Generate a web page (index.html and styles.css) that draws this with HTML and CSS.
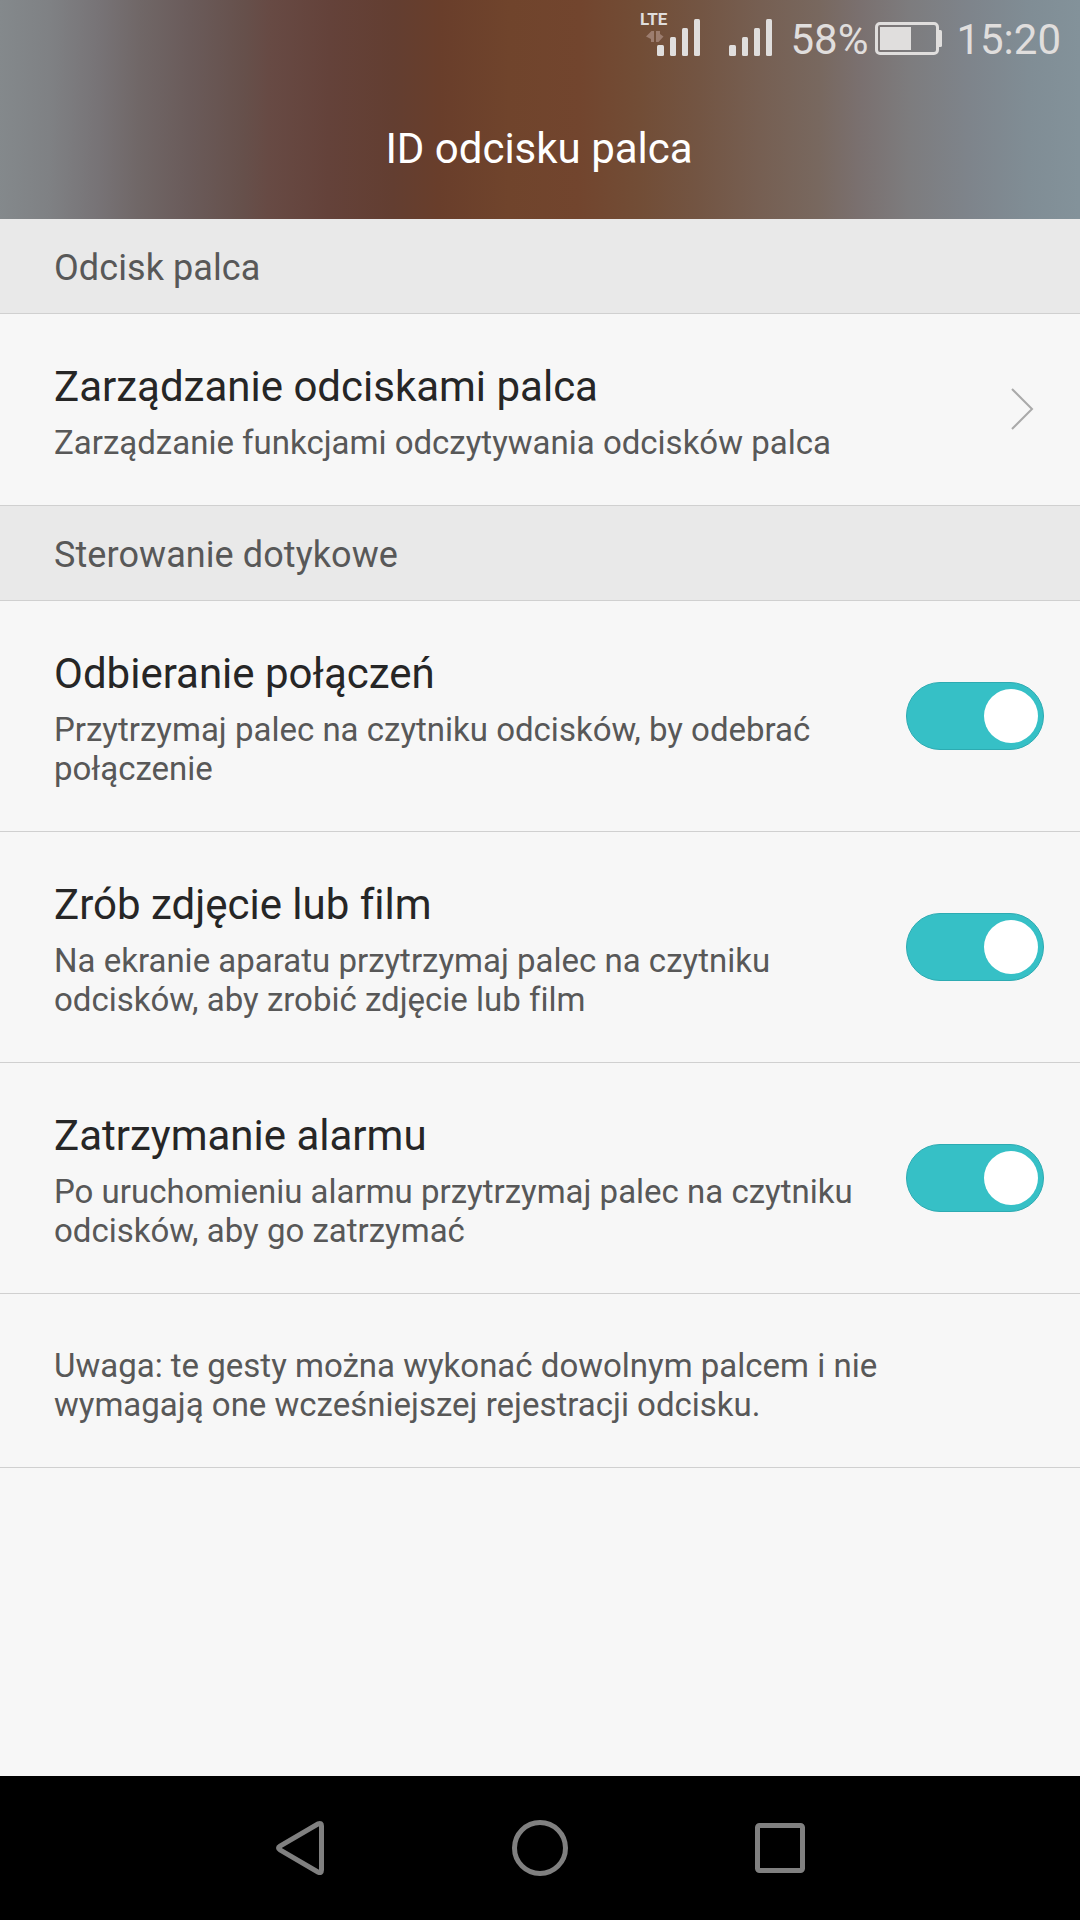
FILE: index.html
```
<!DOCTYPE html>
<html lang="pl">
<head>
  <meta charset="UTF-8" />
  <title>ID odcisku palca</title>
  <meta name="viewport" content="width=device-width, initial-scale=1.0" />
  <link rel="stylesheet" href="styles.css">
</head>
<body>
  <header class="header">
    <div class="status-bar">
      <svg class="signal-lte" width="62" height="60" viewBox="0 0 62 60">
        <text class="lte" x="0" y="25">LTE</text>
        <path class="data-arrows" d="M6 36.500l5.500-5.500h2.500v11h-3v-3zM16 31h4v3l3.500 2.500-5 5.500h-2.500z" />
        <rect x="17" y="45" width="7" height="11" rx="1.5" />
        <rect x="30" y="37" width="6" height="19" rx="1.5" />
        <rect x="42" y="28" width="6" height="28" rx="1.5" />
        <rect x="54" y="19" width="6" height="37" rx="1.5" />
      </svg>
      <svg class="signal" width="44" height="60" viewBox="0 0 44 60">
        <rect x="0" y="45" width="7" height="11" rx="1.5" />
        <rect x="13" y="37" width="6" height="19" rx="1.5" />
        <rect x="25" y="28" width="6" height="28" rx="1.5" />
        <rect x="37" y="19" width="6" height="37" rx="1.5" />
      </svg>
      <span class="percent">58%</span>
      <svg class="battery" width="67" height="60" viewBox="0 0 67 60">
        <rect class="battery-case" x="1.5" y="23.5" width="61" height="30" rx="3.5" />
        <rect x="5" y="27" width="31" height="23" />
        <path d="M63 30h2.500a1.500 1.500 0 0 1 1.500 1.500v14a1.500 1.500 0 0 1-1.500 1.500H63z" />
      </svg>
      <span class="clock">15:20</span>
    </div>
    <h1>ID odcisku palca</h1>
  </header>

  <main class="settings">
    <h2>Odcisk palca</h2>
    <div class="row">
      <div class="text">
        <h3>Zarządzanie odciskami palca</h3>
        <p>Zarządzanie funkcjami odczytywania odcisków palca</p>
      </div>
      <svg class="chevron" width="24" height="44" viewBox="0 0 24 44">
        <path d="M2 1l20 20-20 20" />
      </svg>
    </div>

    <h2>Sterowanie dotykowe</h2>
    <div class="row">
      <div class="text">
        <h3>Odbieranie połączeń</h3>
        <p>Przytrzymaj palec na czytniku odcisków, by odebrać<br>połączenie</p>
      </div>
      <div class="toggle"><span class="knob"></span></div>
    </div>
    <div class="row">
      <div class="text">
        <h3>Zrób zdjęcie lub film</h3>
        <p>Na ekranie aparatu przytrzymaj palec na czytniku<br>odcisków, aby zrobić zdjęcie lub film</p>
      </div>
      <div class="toggle"><span class="knob"></span></div>
    </div>
    <div class="row">
      <div class="text">
        <h3>Zatrzymanie alarmu</h3>
        <p>Po uruchomieniu alarmu przytrzymaj palec na czytniku<br>odcisków, aby go zatrzymać</p>
      </div>
      <div class="toggle"><span class="knob"></span></div>
    </div>
    <p class="note">Uwaga: te gesty można wykonać dowolnym palcem i nie<br>wymagają one wcześniejszej rejestracji odcisku.</p>
  </main>

  <nav class="nav-bar">
    <div class="nav-button">
      <svg width="60" height="60" viewBox="0 0 60 60">
        <path d="M51.500 8Q51.500 4.500 48.200 5.800L10 28.200Q7 30 10 31.800L48.200 54.200Q51.500 55.500 51.500 52z" />
      </svg>
    </div>
    <div class="nav-button">
      <svg width="60" height="60" viewBox="0 0 60 60">
        <circle cx="30" cy="30" r="25.500" />
      </svg>
    </div>
    <div class="nav-button">
      <svg width="60" height="60" viewBox="0 0 60 60">
        <rect x="7.500" y="7.500" width="45" height="45" rx="2" />
      </svg>
    </div>
  </nav>
</body>
</html>
```
FILE: styles.css
```
:root {
  --bg-color: #f7f7f7;
  --section-bg: #e9e9e9;
  --line-color: #d0d0d0;
  --title-color: #262626;
  --text-color: #585858;
  --status-color: #e0dedd;
  --accent: #36c0c6;
}

* {
  box-sizing: border-box;
}

body {
  margin: 0;
  height: 1920px;
  display: flex;
  flex-direction: column;
  font-family: Roboto, sans-serif;
  font-variant-ligatures: none;
  background-color: var(--bg-color);
  color: var(--text-color);
}

h1, h2, h3, p {
  margin: 0;
  font-weight: 400;
}

.header {
  height: 219px;
  background: linear-gradient(90.500deg, #84898c 0, #7f8184 50px, #777376 100px, #706767 140px, #6a5b5a 190px, #66504b 245px, #674a44 270px, #64423a 330px, #633e31 395px, #693e2b 440px, #70442c 510px, #72452e 580px, #724d36 640px, #735543 700px, #765f52 760px, #78685f 820px, #7a706f 860px, #7d7c7e 910px, #7e848b 970px, #808d95 1030px, #83929a 1080px);
}

.status-bar {
  height: 75px;
  padding-right: 19px;
  display: flex;
  justify-content: flex-end;
  color: var(--status-color);
  fill: var(--status-color);
  font-size: 42px;
  line-height: 49px;
}

.lte {
  font-size: 17px;
  font-weight: 700;
}

.data-arrows {
  fill: #9c7d6f;
}

.signal {
  margin-left: 27px;
}

.percent {
  margin-left: 17px;
  padding-top: 15px;
}

.battery {
  margin-left: 7px;
}

.battery-case {
  fill: none;
  stroke: var(--status-color);
  stroke-width: 3;
}

.clock {
  margin-left: 14px;
  padding-top: 15px;
}

h1 {
  padding: 49px 2px 0 0;
  font-size: 42px;
  line-height: 49px;
  color: #fff;
  text-align: center;
}

.settings {
  flex: 1;
}

h2 {
  height: 95px;
  padding: 28px 54px 0;
  font-size: 36px;
  line-height: 42px;
  letter-spacing: 0.08px;
  background-color: var(--section-bg);
  border-bottom: 1px solid var(--line-color);
}

.row {
  display: flex;
  justify-content: space-between;
  align-items: center;
  padding-right: 36px;
  border-bottom: 1px solid var(--line-color);
}

.text {
  padding: 48px 0 43px 54px;
}

h3 {
  margin-bottom: 12px;
  font-size: 42px;
  line-height: 49px;
  color: var(--title-color);
}

p {
  font-size: 33px;
  line-height: 39px;
  white-space: nowrap;
}

.note {
  padding: 52px 54px 43px;
  border-bottom: 1px solid var(--line-color);
}

.chevron {
  margin-right: 10px;
  fill: none;
  stroke: #aaa;
  stroke-width: 2;
}

.toggle {
  width: 138px;
  height: 68px;
  padding: 0 5px;
  display: flex;
  justify-content: flex-end;
  align-items: center;
  background-color: var(--accent);
  border: 1px solid #2dabb2;
  border-radius: 34px;
}

.knob {
  width: 54px;
  height: 54px;
  background-color: #fff;
  border-radius: 50%;
}

.nav-bar {
  height: 144px;
  display: flex;
  justify-content: center;
  background-color: #000;
}

.nav-button {
  width: 240px;
  display: flex;
  justify-content: center;
  align-items: center;
  fill: none;
  stroke: #808080;
  stroke-width: 5;
}
```
